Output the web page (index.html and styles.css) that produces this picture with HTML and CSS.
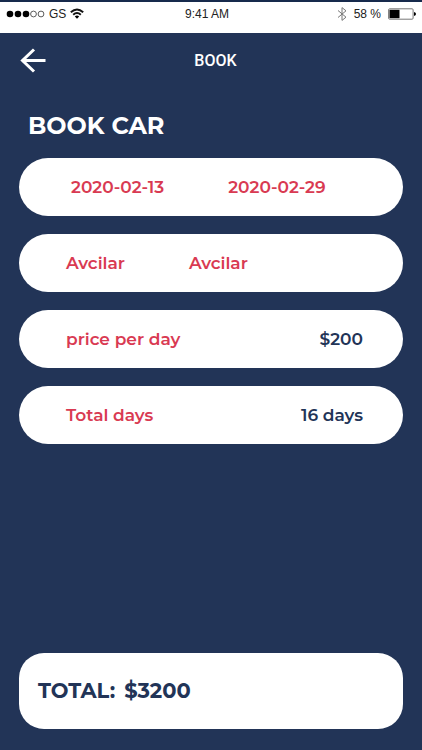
FILE: index.html
```
<!DOCTYPE html>
<html lang="en">
<head>
<meta charset="utf-8">
<meta name="viewport" content="width=device-width, initial-scale=1">
<title>Book</title>
<link rel="stylesheet" href="styles.css">
</head>
<body>
<div class="status">
  <div class="status-group">
    <svg width="39" height="8" viewBox="0 0 39 8" aria-hidden="true">
      <circle cx="4" cy="4" r="3.3"/><circle cx="12" cy="4" r="3.3"/><circle cx="20" cy="4" r="3.3"/>
      <g fill="none" stroke="#333" stroke-width=".8"><circle cx="27.5" cy="4" r="2.9"/><circle cx="35" cy="4" r="2.9"/></g>
    </svg>
    <span>GS</span>
    <svg width="14" height="11" viewBox="0 0 14 11" aria-hidden="true">
      <g fill="none" stroke="#111" stroke-width="1.9"><path d="M.8 4.3Q7-1.4 13.2 4.3"/><path d="M3.2 6.8Q7 3.3 10.8 6.8"/></g>
      <path d="M4.8 8.4Q7 6.6 9.2 8.4L7 10.8Z"/>
    </svg>
  </div>
  <time class="clock">9:41 AM</time>
  <div class="status-group status-right">
    <svg class="bluetooth" width="10" height="14" viewBox="0 0 10 14" fill="none" stroke="#777" aria-hidden="true"><path d="M1 3.5L9 10.2L5 13.4V.6L9 3.8L1 10.5"/></svg>
    <span>58 %</span>
    <svg class="battery" width="28" height="12" viewBox="0 0 28 12" aria-hidden="true">
      <rect x=".6" y=".8" width="24.5" height="10.4" rx="1" fill="#fff" stroke="#777"/>
      <path d="M1.5 1.8H11.5V10.2H1.5Z"/><path d="M26 4Q28 4.5 28 6T26 8Z"/>
    </svg>
  </div>
</div>
<header class="bar">
  <button class="back" type="button" aria-label="Back">
    <svg width="26" height="26" viewBox="0 0 26 26" fill="none" stroke="#fff" stroke-width="3" aria-hidden="true"><path d="M25.500 12.500H3M14 1.500L2.500 12.500L14 23.500"/></svg>
  </button>
  <span class="bar-title">BOOK</span>
</header>
<main class="content">
  <h1>BOOK CAR</h1>
  <div class="card dates"><time>2020-02-13</time><time>2020-02-29</time></div>
  <div class="card places"><span>Avcilar</span><span>Avcilar</span></div>
  <div class="card amount"><span>price per day</span><strong>$200</strong></div>
  <div class="card amount"><span>Total days</span><strong>16 days</strong></div>
  <div class="total"><span>TOTAL:</span><span>$3200</span></div>
</main>
</body>
</html>
```
FILE: styles.css
```
* {
  box-sizing: border-box;
}

body {
  margin: 0;
  min-height: 100vh;
  display: flex;
  flex-direction: column;
  background: #223457;
  font-family: Montserrat, Inter, sans-serif;
  color: #223457;
}

svg {
  display: block;
}

.status {
  display: grid;
  grid-template-columns: 1fr auto 1fr;
  align-items: center;
  height: 33px;
  padding: 0 6px 8px;
  border-top: 2px solid #172a4c;
  background: #fff;
  color: #222;
  font: 12px/16px "Liberation Sans", sans-serif;
}

.status-group {
  display: flex;
  align-items: center;
  gap: 4px;
}

.status-right {
  justify-content: flex-end;
  gap: 7px;
}

.clock {
  padding-right: 8px;
}

.bar {
  display: grid;
  grid-template-columns: 1fr auto 1fr;
  align-items: center;
  height: 55px;
  padding: 0 20px;
}

.back {
  justify-self: start;
  padding: 0;
  border: 0;
  background: none;
  cursor: pointer;
}

.bar-title {
  grid-column: 2;
  padding-left: 9px;
  color: #fff;
  font: 500 16px/20px Roboto, sans-serif;
}

.content {
  flex: 1;
  display: flex;
  flex-direction: column;
  gap: 18px;
  padding: 24px 19px 21px;
}

h1 {
  margin: 0;
  padding-left: 9px;
  color: #fff;
  font-size: 24px;
  font-weight: 700;
  line-height: 28px;
}

.card {
  display: flex;
  align-items: center;
  height: 58px;
  padding: 0 40px 0 47px;
  border-radius: 29px;
  background: #fff;
  color: #d93a52;
  font-size: 17px;
  font-weight: 600;
  line-height: 24px;
}

.dates {
  gap: 64px;
  padding-left: 52px;
}

.places {
  gap: 64px;
}

.amount {
  justify-content: space-between;
}

.amount strong {
  color: #223457;
  font-weight: 600;
}

.total {
  display: flex;
  align-items: center;
  gap: 9px;
  height: 76px;
  margin-top: auto;
  padding: 0 19px;
  border-radius: 25px;
  background: #fff;
  font-size: 21px;
  font-weight: 700;
  line-height: 30px;
}
```
